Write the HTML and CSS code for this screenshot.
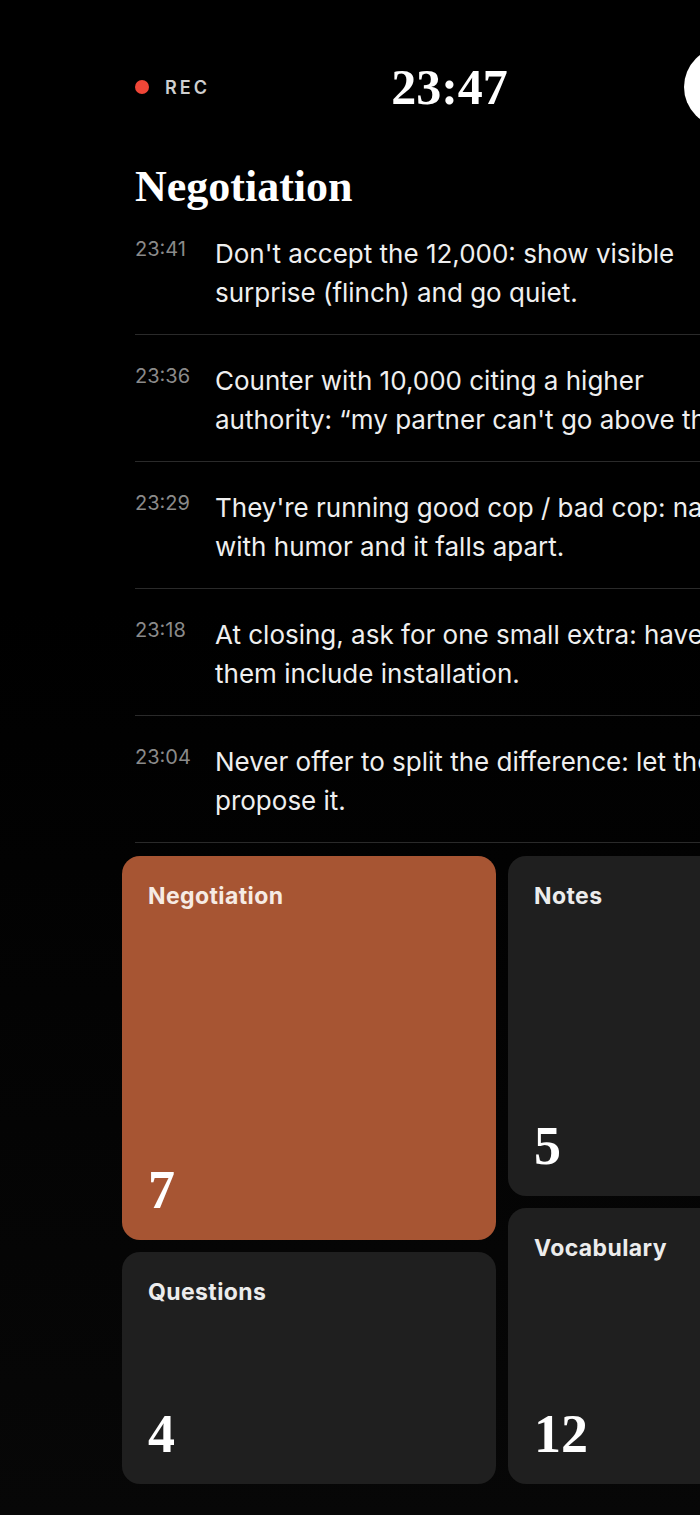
FILE: index.html
```html
<!DOCTYPE html>
<html lang="en">
<head>
<meta charset="utf-8">
<title>Negotiation</title>
<link rel="stylesheet" href="styles.css">
</head>
<body>
<div class="page">
  <header class="topbar">
    <div class="rec"><span class="rec-dot"></span><span class="rec-label">REC</span></div>
    <div class="clock">23:47</div>
    <div class="avatar"></div>
  </header>

  <h1 class="title">Negotiation</h1>

  <ul class="tips">
    <li class="tip"><span class="tip-time">23:41</span><p class="tip-text">Don't accept the 12,000: show visible<br>surprise (flinch) and go quiet.</p></li>
    <li class="tip"><span class="tip-time">23:36</span><p class="tip-text">Counter with 10,000 citing a higher<br>authority: “my partner can't go above that.”</p></li>
    <li class="tip"><span class="tip-time">23:29</span><p class="tip-text">They're running good cop / bad cop: name it<br>with humor and it falls apart.</p></li>
    <li class="tip"><span class="tip-time">23:18</span><p class="tip-text">At closing, ask for one small extra: have<br>them include installation.</p></li>
    <li class="tip"><span class="tip-time">23:04</span><p class="tip-text">Never offer to split the difference: let them<br>propose it.</p></li>
  </ul>

  <section class="cards">
    <div class="col">
      <div class="card card-accent card-xl"><span class="card-label">Negotiation</span><span class="card-num">7</span></div>
      <div class="card card-s"><span class="card-label">Questions</span><span class="card-num">4</span></div>
    </div>
    <div class="col">
      <div class="card card-l"><span class="card-label">Notes</span><span class="card-num">5</span></div>
      <div class="card card-m"><span class="card-label">Vocabulary</span><span class="card-num">12</span></div>
    </div>
  </section>
</div>
</body>
</html>
```

FILE: styles.css
```css
html, body {
  margin: 0;
  padding: 0;
  overflow: hidden;
}
body {
  background: linear-gradient(#000 0%, #000 40%, #070707 100%);
  min-height: 1515px;
  color: #fff;
  font-family: Inter, "Noto Sans", sans-serif;
}
.page {
  width: 629px;
  margin-left: 135px;
  padding-top: 47px;
}
.topbar {
  display: flex;
  align-items: center;
  justify-content: space-between;
  height: 80px;
}
.rec {
  display: flex;
  align-items: center;
  gap: 16px;
  width: 120px;
}
.rec-dot {
  width: 14px;
  height: 14px;
  border-radius: 50%;
  background: #f04637;
}
.rec-label {
  font-size: 18px;
  font-weight: 600;
  letter-spacing: 3px;
  color: #cfcfcf;
}
.clock {
  font-family: "Liberation Serif", serif;
  font-weight: 700;
  font-size: 50px;
  line-height: 1;
}
.avatar {
  width: 80px;
  height: 80px;
  border-radius: 50%;
  background: #fff;
  margin-left: 40px;
}
.title {
  margin: 38px 0 0;
  font-family: "Liberation Serif", serif;
  font-weight: 700;
  font-size: 44px;
  line-height: 44px;
}
.tips {
  list-style: none;
  margin: -1px 0 0;
  padding: 0;
  width: 700px;
}
.tip {
  display: flex;
  align-items: flex-start;
  padding: 26px 0 22px;
  border-bottom: 1px solid #2a2a2a;
}
.tip-time {
  flex: 0 0 80px;
  font-size: 20px;
  line-height: 20px;
  margin-top: 5px;
  color: #8a8a8a;
}
.tip-text {
  margin: 0;
  white-space: nowrap;
  font-size: 26px;
  line-height: 39px;
  color: #efefef;
}
.cards {
  display: grid;
  grid-template-columns: 374px 374px;
  gap: 12px;
  margin: 13px 0 0 -13px;
}
.col {
  display: flex;
  flex-direction: column;
  gap: 12px;
}
.card {
  box-sizing: border-box;
  display: flex;
  flex-direction: column;
  justify-content: space-between;
  padding: 26px 26px 23px;
  border-radius: 18px;
  background: #1f1f1f;
}
.card-accent {
  background: #a75533;
}
.card-xl { height: 384px; }
.card-l { height: 340px; }
.card-m { height: 276px; }
.card-s { height: 232px; }
.card-label {
  font-size: 23px;
  font-weight: 700;
  letter-spacing: 0.4px;
  color: #ececec;
}
.card-accent .card-label {
  color: #f6ebe4;
}
.card-num {
  font-family: "Liberation Serif", serif;
  font-weight: 700;
  font-size: 54px;
  line-height: 54px;
  color: #fff;
}
```
